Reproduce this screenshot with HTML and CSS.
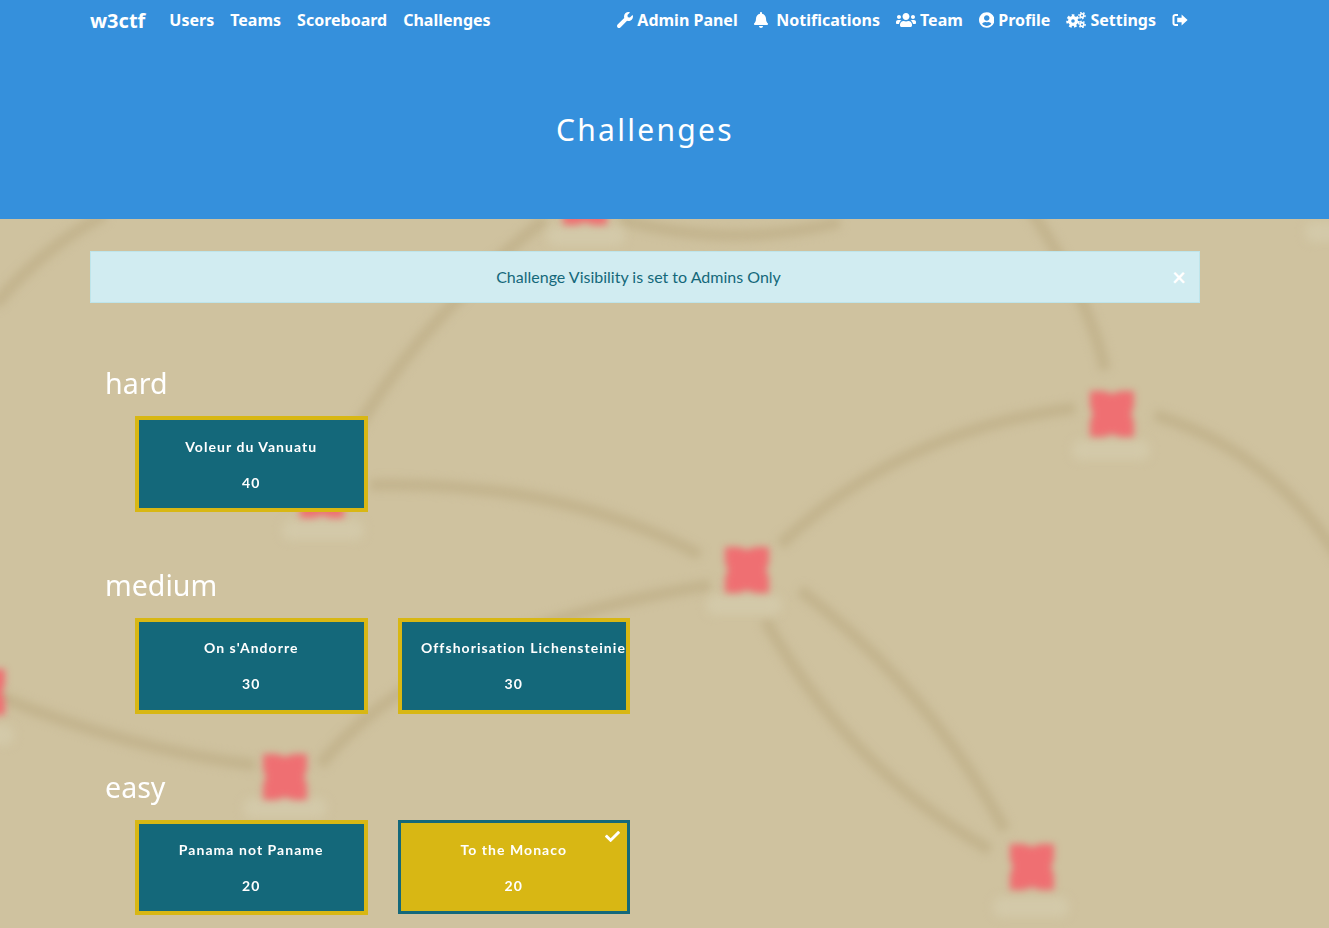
FILE: index.html
```html
<!DOCTYPE html>
<html lang="en">
<head>
<meta charset="utf-8">
<title>Challenges</title>
<link rel="stylesheet" href="styles.css">
</head>
<body>
<header class="hero">
  <nav class="nav">
    <a class="brand" href="#">w3ctf</a>
    <ul class="links">
      <li><a href="#">Users</a></li>
      <li><a href="#">Teams</a></li>
      <li><a href="#">Scoreboard</a></li>
      <li><a href="#">Challenges</a></li>
    </ul>
    <ul class="links links-right">
      <li><a href="#"><svg class="ico ico-wrench" viewBox="0 0 512 512"><path d="M507.73 109.1c-2.24-9.03-13.54-12.09-20.12-5.51l-74.36 74.36-67.88-11.31-11.31-67.88 74.36-74.36c6.62-6.62 3.43-17.9-5.66-20.16-47.38-11.74-99.55.91-136.58 37.93-39.64 39.64-50.55 97.1-34.05 147.2L18.74 402.76c-24.99 24.99-24.99 65.51 0 90.5 24.99 24.99 65.51 24.99 90.5 0l213.21-213.21c50.12 16.71 107.47 5.68 147.37-34.22 37.07-37.07 49.7-89.32 37.91-136.73z"/></svg>Admin Panel</a></li>
      <li><a href="#"><svg class="ico ico-bell" viewBox="0 0 448 512"><path d="M224 512c35.32 0 63.97-28.65 63.97-64H160.03c0 35.35 28.65 64 63.97 64zm215.39-149.71c-19.32-20.76-55.47-51.99-55.47-154.29 0-77.7-54.48-139.9-127.94-155.16V32c0-17.67-14.32-32-31.98-32s-31.98 14.33-31.98 32v20.84C118.56 68.1 64.08 130.3 64.08 208c0 102.3-36.15 133.53-55.47 154.29-6 6.45-8.66 14.16-8.61 21.71.11 16.4 12.98 32 32.1 32h383.8c19.12 0 32-15.6 32.1-32 .05-7.55-2.61-15.27-8.61-21.71z"/></svg>Notifications</a></li>
      <li><a href="#"><svg class="ico ico-users" viewBox="0 0 640 512"><path d="M96 224c35.3 0 64-28.7 64-64s-28.7-64-64-64-64 28.7-64 64 28.7 64 64 64zm448 0c35.3 0 64-28.7 64-64s-28.7-64-64-64-64 28.7-64 64 28.7 64 64 64zm32 32h-64c-17.6 0-33.5 7.1-45.1 18.6 40.3 22.1 68.9 62 75.1 109.4h66c17.7 0 32-14.3 32-32v-32c0-35.3-28.7-64-64-64zm-256 0c61.9 0 112-50.1 112-112S381.9 32 320 32 208 82.1 208 144s50.1 112 112 112zm76.8 32h-8.3c-20.8 10-43.9 16-68.5 16s-47.6-6-68.5-16h-8.3C179.6 288 128 339.6 128 403.2V432c0 26.5 21.5 48 48 48h288c26.5 0 48-21.5 48-48v-28.8c0-63.6-51.6-115.2-115.2-115.2zm-223.7-13.4C161.5 263.1 145.6 256 128 256H64c-35.3 0-64 28.7-64 64v32c0 17.7 14.3 32 32 32h65.9c6.3-47.4 34.9-87.3 75.2-109.4z"/></svg>Team</a></li>
      <li><a href="#"><svg class="ico ico-user" viewBox="0 0 496 512"><path d="M248 8C111 8 0 119 0 256s111 248 248 248 248-111 248-248S385 8 248 8zm0 96c48.6 0 88 39.4 88 88s-39.4 88-88 88-88-39.4-88-88 39.4-88 88-88zm0 344c-58.7 0-111.3-26.6-146.5-68.2 18.8-35.4 55.6-59.8 98.5-59.8 2.4 0 4.8.4 7.1 1.1 13 4.2 26.6 6.9 40.9 6.9 14.3 0 28-2.7 40.9-6.9 2.3-.7 4.7-1.1 7.1-1.1 42.9 0 79.7 24.4 98.5 59.8C359.3 421.4 306.7 448 248 448z"/></svg>Profile</a></li>
      <li><a href="#"><svg class="ico ico-cogs" viewBox="0 0 20 16"><g class="cog-stroke"><circle class="cog-big" cx="7" cy="9" r="3.4"/><circle class="cog-big-teeth" cx="7" cy="9" r="5.6"/><circle class="cog-small" cx="16" cy="3.6" r="1.8"/><circle class="cog-small-teeth" cx="16" cy="3.6" r="3.1"/><circle class="cog-small" cx="16" cy="12.4" r="1.8"/><circle class="cog-small-teeth" cx="16" cy="12.4" r="3.1"/></g></svg>Settings</a></li>
      <li><a href="#" aria-label="Log out"><svg class="ico ico-out" viewBox="0 0 16 14"><path class="out-frame" d="M6 2H3.2A1.7 1.7 0 0 0 1.5 3.7v6.6A1.7 1.7 0 0 0 3.2 12H6"/><path d="M9.6 1.6 15.6 7l-6 5.4V9.3H5.2V4.7h4.4z"/></svg></a></li>
    </ul>
  </nav>
  <h1 class="title">Challenges</h1>
</header>

<main class="board">
  <svg class="map" viewBox="0 0 1329 709" preserveAspectRatio="none" aria-hidden="true">
    <defs>
      <path id="mark" d="M-22-23H-8L0-20 8-23H22V-8L19 0 22 8V23H8L0 20-8 23H-22V8L-19 0-22-8z"/>
    </defs>
    <g class="routes">
      <path d="M780 326Q900 211 1075 189"/>
      <path d="M1155 196Q1270 231 1340 340"/>
      <path d="M1030-10Q1090 80 1105 151"/>
      <path d="M700 336Q560 261 370 266"/>
      <path d="M710 366Q430 411 320 546"/>
      <path d="M800 371Q930 471 1005 611"/>
      <path d="M765 401Q850 551 990 631"/>
      <path d="M-5 476Q130 531 255 546"/>
      <path d="M105-5Q40 31-5 86"/>
      <path d="M545 0Q420 101 350 221"/>
      <path d="M620 0Q730 31 840 3"/>
    </g>
    <g class="labels">
      <rect x="1072" y="221" width="78" height="20" rx="9"/>
      <rect x="706" y="376" width="76" height="20" rx="9"/>
      <rect x="243" y="579" width="84" height="20" rx="9"/>
      <rect x="993" y="678" width="76" height="20" rx="9"/>
      <rect x="547" y="7" width="78" height="20" rx="9"/>
      <rect x="282" y="301" width="82" height="20" rx="9"/>
      <rect x="1305" y="3" width="40" height="20" rx="9"/>
      <rect x="-30" y="506" width="44" height="20" rx="9"/>
    </g>
    <g class="marks">
      <use href="#mark" x="1112" y="195"/>
      <use href="#mark" x="747" y="351"/>
      <use href="#mark" x="285" y="558"/>
      <use href="#mark" x="1032" y="648"/>
      <use href="#mark" x="-17" y="473"/>
      <use href="#mark" x="585" y="-17"/>
      <use href="#mark" x="322" y="276"/>
    </g>
  </svg>

  <div class="content">
    <div class="alert">
      <span class="alert-text">Challenge Visibility is set to Admins Only</span>
      <button class="close" type="button" aria-label="Close">×</button>
    </div>

    <section class="cat">
      <h2 class="cat-name">hard</h2>
      <div class="cards">
        <article class="card"><span class="card-name">Voleur du Vanuatu</span><span class="card-pts">40</span></article>
      </div>
    </section>

    <section class="cat">
      <h2 class="cat-name">medium</h2>
      <div class="cards">
        <article class="card"><span class="card-name">On s'Andorre</span><span class="card-pts">30</span></article>
        <article class="card"><span class="card-name card-name-clip">Offshorisation Lichensteinienne</span><span class="card-pts">30</span></article>
      </div>
    </section>

    <section class="cat">
      <h2 class="cat-name">easy</h2>
      <div class="cards">
        <article class="card"><span class="card-name">Panama not Paname</span><span class="card-pts">20</span></article>
        <article class="card card-solved">
          <svg class="solved-mark" viewBox="0 0 512 512"><path d="M173.898 439.404l-166.4-166.4c-9.997-9.997-9.997-26.206 0-36.204l36.203-36.204c9.997-9.998 26.207-9.998 36.204 0L192 312.69 432.095 72.596c9.997-9.997 26.207-9.997 36.204 0l36.203 36.204c9.997 9.997 9.997 26.206 0 36.204l-294.4 294.401c-9.998 9.997-26.207 9.997-36.204-.001z"/></svg>
          <span class="card-name">To the Monaco</span><span class="card-pts">20</span>
        </article>
      </div>
    </section>
  </div>
</main>
</body>
</html>
```

FILE: styles.css
```css
* { box-sizing: border-box; }

html, body {
  margin: 0;
  height: 928px;
  overflow: hidden;
}

body {
  font-family: "Lato", "Liberation Sans", sans-serif;
  background: #cfc29f;
  color: #fff;
}

a { color: inherit; text-decoration: none; }

.hero {
  height: 219px;
  background: #3590dc;
}

.nav {
  display: flex;
  align-items: center;
  height: 40px;
  width: 1110px;
  margin-left: 90px;
  font-family: "Noto Sans", "Open Sans", sans-serif;
  font-weight: 700;
  font-size: 16px;
}

.brand {
  font-size: 20px;
  font-weight: 700;
  margin-right: 16px;
}

.links {
  display: flex;
  align-items: center;
  margin: 0;
  padding: 0;
  list-style: none;
}

.links li a {
  display: flex;
  align-items: center;
  padding: 0 8px;
  white-space: nowrap;
}

.links-right {
  margin-left: auto;
  margin-right: 4px;
}

.ico {
  display: block;
  height: 16px;
  fill: #fff;
  margin-right: 4px;
}

.ico-wrench { width: 16px; }
.ico-bell { width: 14px; margin: 0 8.6px 0 0; }
.ico-users { width: 20px; }
.ico-user { width: 15.5px; }
.ico-cogs { width: 20px; }
.ico-out { width: 16px; height: 14px; margin-right: 0; }

.cog-stroke { fill: none; stroke: #fff; }
.cog-big { stroke-width: 3.2; }
.cog-big-teeth { stroke-width: 2.4; stroke-dasharray: 2.6 2.3; }
.cog-small { stroke-width: 1.6; }
.cog-small-teeth { stroke-width: 1.4; stroke-dasharray: 1.5 1.6; }

.out-frame { fill: none; stroke: #fff; stroke-width: 2; }

.title {
  margin: 70px 0 0;
  width: 1290px;
  text-align: center;
  font-family: "Noto Sans", "Open Sans", sans-serif;
  font-weight: 400;
  font-size: 30px;
  line-height: 40px;
  letter-spacing: 2.3px;
}

.board {
  position: relative;
  height: 709px;
  overflow: hidden;
}

.map {
  position: absolute;
  inset: 0;
  width: 100%;
  height: 100%;
}

.routes {
  fill: none;
  stroke: #c3b48e;
  stroke-width: 12;
  filter: blur(4.5px);
}

.labels {
  fill: #d3c9a9;
  filter: blur(5px);
}

.marks {
  fill: #ef6f72;
  filter: blur(3.5px);
}

.content {
  position: relative;
  width: 1110px;
  margin-left: 90px;
  padding-top: 32px;
}

.alert {
  position: relative;
  height: 52px;
  padding: 0 33px 2px 20px;
  display: flex;
  align-items: center;
  justify-content: center;
  background: #d1ecf1;
  border: 1px solid #bee5eb;
  color: #14687a;
  font-size: 16px;
}

.close {
  position: absolute;
  right: 13px;
  top: 11px;
  padding: 0;
  border: 0;
  background: none;
  color: #fff;
  font-family: "Lato", sans-serif;
  font-size: 24px;
  font-weight: 700;
  line-height: 28px;
}

.cat { height: 201.7px; padding-left: 15px; }
.cat:first-of-type { margin-top: 63.4px; }

.cat-name {
  margin: 0;
  font-family: "Noto Sans", "Open Sans", sans-serif;
  font-weight: 400;
  font-size: 28.6px;
  line-height: 34px;
  height: 50px;
}

.cards {
  display: flex;
  gap: 30px;
  padding-left: 30px;
}

.card {
  position: relative;
  flex: 0 0 232.5px;
  height: 95.6px;
  display: flex;
  flex-direction: column;
  align-items: center;
  padding-top: 16.3px;
  overflow: hidden;
  background: #14687a;
  border: 4px solid #d8b714;
  font-size: 14px;
  font-weight: 700;
  letter-spacing: 1.05px;
  line-height: 20px;
  white-space: nowrap;
}

.card-name-clip {
  align-self: flex-start;
  padding-left: 19.5px;
}

.card-pts { margin-top: 16px; }

.card-solved {
  height: 94.5px;
  padding-top: 17.3px;
  background: #d8b714;
  border: 3px solid #14687a;
}

.solved-mark {
  position: absolute;
  top: 6px;
  right: 7px;
  width: 15px;
  height: 15px;
  fill: #fff;
}
```
